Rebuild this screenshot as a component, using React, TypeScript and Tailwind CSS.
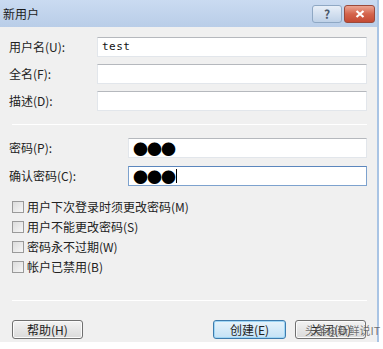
import React from 'react';

const font = { fontFamily: '"Noto Sans CJK SC", "Liberation Sans", sans-serif' };

const Field = ({ children, focused }: { children?: React.ReactNode; focused?: boolean }) => (
  <div
    className={`flex-1 h-[20px] bg-white flex items-center pl-[4px] border ${
      focused
        ? 'border-[#7da2ce] border-t-[#5b86bd]'
        : 'border-[#e2e6eb] border-t-[#b5b8bd]'
    }`}
  >
    {children}
  </div>
);

const Row = ({ label, labelW, children, focused }: { label: string; labelW: string; children?: React.ReactNode; focused?: boolean }) => (
  <div className="flex items-center h-[20px]">
    <span className={`${labelW} shrink-0 text-[12px] text-[#222] leading-none`}>{label}</span>
    <Field focused={focused}>{children}</Field>
  </div>
);

const Check = ({ label }: { label: string }) => (
  <div className="flex items-center h-[20px] pl-[3px]">
    <span className="w-[12px] h-[12px] border border-[#9a9a9a] bg-gradient-to-br from-[#dcdcdc] to-[#f7f7f7] shrink-0" />
    <span className="ml-[3px] text-[12px] text-[#222] leading-none">{label}</span>
  </div>
);

const Button = ({ label, w, focused }: { label: string; w: string; focused?: boolean }) => (
  <div
    className={`${w} h-[19px] rounded-[3px] border flex items-center justify-center text-[12px] text-[#222] leading-none ${
      focused
        ? 'border-[#3d7bad] bg-gradient-to-b from-[#e6f3fb] to-[#c4e2f6] shadow-[inset_0_0_0_1px_#9fd6f5]'
        : 'border-[#707070] bg-gradient-to-b from-[#f3f3f3] to-[#dadada] shadow-[inset_0_0_0_1px_#fbfbfb]'
    }`}
  >
    {label}
  </div>
);

export default function App() {
  return (
    <div className="w-[383px] h-[349px] bg-white overflow-hidden relative" style={font}>
      <div className="w-[379px] flex flex-col border-r-2 border-[#a9c4e4]">
        {/* title bar */}
        <div className="h-[27px] bg-gradient-to-b from-[#cadbf1] to-[#b9cde8] flex items-center pl-[3px] pr-[2px]">
          <span className="text-[12px] text-[#1b1b1b] leading-none">新用户</span>
          <div className="ml-auto flex items-center gap-[2px] pt-[1px]">
            <div className="w-[30px] h-[18px] rounded-[3px] border border-[#8fa8c4] bg-gradient-to-b from-[#e8eff8] to-[#bfd1e7] flex items-center justify-center text-[12px] font-bold text-[#4a586a] leading-none">
              ?
            </div>
            <div className="w-[31px] h-[18px] rounded-[3px] border border-[#9a4a3c] bg-gradient-to-b from-[#eba594] via-[#d4644c] to-[#c44a34] flex items-center justify-center">
              <svg width="10" height="8" viewBox="0 0 10 8">
                <path d="M1.5 1 L8.5 7 M8.5 1 L1.5 7" stroke="#fff" strokeWidth="2.2" />
              </svg>
            </div>
          </div>
        </div>

        {/* body */}
        <div className="bg-[#f0f0f0] pl-[9px] pr-[10px] pt-[10px] pb-[3px] flex flex-col">
          <div className="flex flex-col gap-[7px]">
            <Row label="用户名(U):" labelW="w-[88px]">
              <span className="text-[11px] text-[#111] tracking-[0.5px]" style={{ fontFamily: '"DejaVu Sans Mono", monospace' }}>test</span>
            </Row>
            <Row label="全名(F):" labelW="w-[88px]" />
            <Row label="描述(D):" labelW="w-[88px]" />
          </div>

          <div className="h-px bg-[#a0a0a0] mt-[13px] ml-[3px] border-b border-white" />

          <div className="flex flex-col gap-[8px] mt-[13px]">
            <Row label="密码(P):" labelW="w-[119px]">
              <span className="text-[15px] text-black leading-none tracking-[-1px]">●●●</span>
            </Row>
            <Row label="确认密码(C):" labelW="w-[119px]" focused>
              <span className="text-[15px] text-black leading-none tracking-[-1px]">●●●</span>
              <span className="w-px h-[14px] bg-black ml-[1px]" />
            </Row>
          </div>

          <div className="flex flex-col mt-[11px]">
            <Check label="用户下次登录时须更改密码(M)" />
            <Check label="用户不能更改密码(S)" />
            <Check label="密码永不过期(W)" />
            <Check label="帐户已禁用(B)" />
          </div>

          <div className="h-px bg-[#a0a0a0] mt-[23px] ml-[3px] border-b border-white" />

          <div className="flex items-center mt-[19px] pl-[3px]">
            <Button label="帮助(H)" w="w-[71px]" />
            <div className="ml-auto flex gap-[9px] mr-[1px]">
              <Button label="创建(E)" w="w-[73px]" focused />
              <Button label="关闭(O)" w="w-[71px]" />
            </div>
          </div>
        </div>
      </div>

      {/* watermark */}
      <span className="absolute left-[305px] top-[325px] whitespace-nowrap text-[11px] text-[#4a4a4a] leading-none opacity-75 [text-shadow:0_0_2px_#fff]">
        头条@新鲜说IT
      </span>
    </div>
  );
}
